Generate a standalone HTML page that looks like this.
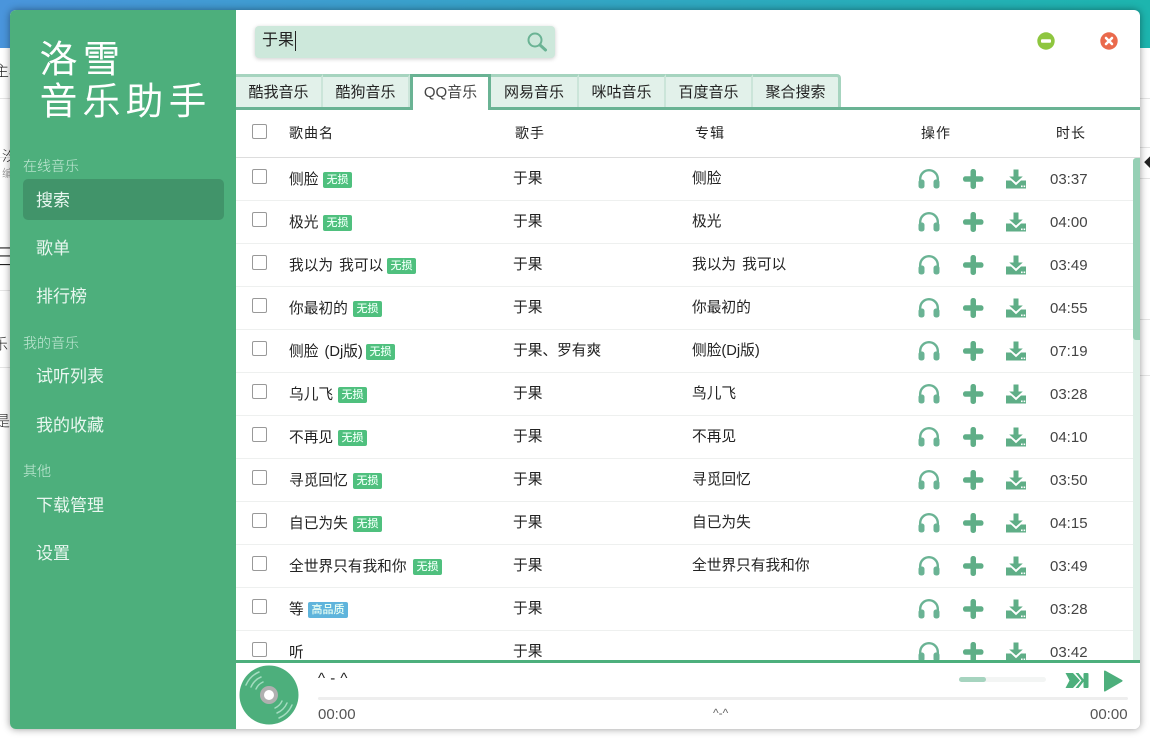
<!DOCTYPE html>
<html lang="zh"><head><meta charset="utf-8"><title>洛雪音乐助手</title>
<style>
*{box-sizing:border-box}
html,body{margin:0;padding:0}
body{width:1150px;height:738px;overflow:hidden;position:relative;background:#fff;font-family:"Liberation Sans","Noto Sans CJK SC",sans-serif;color:#222;font-weight:300}
div,span,svg{position:absolute}
.t{white-space:nowrap;line-height:20px}
#top{left:0;top:0;width:1150px;height:48px;background:linear-gradient(90deg,#4a95dc,#1db5ae)}
#win{left:10px;top:10px;width:1130px;height:719px;background:#fff;border-radius:6px;overflow:hidden;box-shadow:0 0 8px rgba(0,0,0,.42)}
#side{left:0;top:0;width:226px;height:719px;background:#4daf7c;color:#e9f7f0}
.logo{font-size:37px;letter-spacing:6px;color:#fff;line-height:40px;left:30px;font-family:"WenQuanYi Zen Hei","Noto Sans CJK SC",sans-serif;-webkit-text-stroke:.9px #fff}
.gr{left:13px;font-size:14px;color:#c6ead8}
.it{left:26px;font-size:17px;color:#e9f7f0;font-weight:400;margin-top:1px}
.tab{top:64px;height:33px;background:#e2f1ea;border-top:3px solid #a6d4bf;border-right:2px solid #cbe5d9;font-size:15px;text-align:center;line-height:31px;color:#222;font-weight:400}
.hd{top:113px;font-size:14px;letter-spacing:1px;color:#222;margin-left:-1px;font-weight:400}
.line{left:226px;width:897px;height:1px;background:#eef0ef}
.cb{left:242px;width:15px;height:15px;border:1px solid #999;border-radius:2px;background:#fff}
.n,.s,.a{font-size:14.7px;color:#222;font-weight:400;margin-top:1px;word-spacing:2px}
.d{left:1040px;font-size:15px;color:#444;margin-top:1px}
.bd{height:16px;border-radius:2px;color:#e9fff4;font-size:11px;line-height:16px;text-align:center;background:#4fc07e;width:29px;font-weight:500;white-space:nowrap;overflow:hidden}
.bd.h{background:#5fb4dc;width:40px}
</style></head><body>
<div id="top"></div>
<div style="left:0;top:98px;width:10px;height:1px;background:#e5e5e5"></div>
<div style="left:1140px;top:98px;width:10px;height:1px;background:#e5e5e5"></div>
<div style="left:1140px;top:147px;width:10px;height:1px;background:#e5e5e5"></div>
<div style="left:1140px;top:178px;width:10px;height:1px;background:#e5e5e5"></div>
<div style="left:1140px;top:319px;width:10px;height:1px;background:#e5e5e5"></div>
<div style="left:1140px;top:375px;width:10px;height:1px;background:#e5e5e5"></div>
<div style="left:0;top:157px;width:10px;height:1px;background:#e5e5e5"></div>
<div style="left:0;top:290px;width:10px;height:1px;background:#e5e5e5"></div>
<div style="left:0;top:367px;width:10px;height:1px;background:#e5e5e5"></div>
<div class="t" style="left:-6px;top:62px;font-size:15px">主材</div>
<div class="t" style="left:2px;top:146px;font-size:14px">汐</div>
<div class="t" style="left:2px;top:164px;font-size:11px;color:#888">编</div>
<div class="t" style="left:-6px;top:248px;font-size:24px">三</div>
<div class="t" style="left:-7px;top:335px;font-size:15px">乐</div>
<div class="t" style="left:-5px;top:412px;font-size:15px">是</div>
<div class="t" style="left:1144px;top:153px;font-size:13px;font-weight:700">◆</div>
<div id="win">
<div id="side">
<div class="logo t" style="top:26px;line-height:40px">洛雪</div>
<div class="logo t" style="top:68px;line-height:40px">音乐助手</div>
<div class="gr t" style="top:146px">在线音乐</div>
<div style="left:13px;top:169px;width:201px;height:41px;border-radius:5px;background:#41946a"></div>
<div class="it t" style="top:180px">搜索</div>
<div class="it t" style="top:228px">歌单</div>
<div class="it t" style="top:276px">排行榜</div>
<div class="gr t" style="top:323px">我的音乐</div>
<div class="it t" style="top:356px">试听列表</div>
<div class="it t" style="top:405px">我的收藏</div>
<div class="gr t" style="top:451px">其他</div>
<div class="it t" style="top:485px">下载管理</div>
<div class="it t" style="top:533px">设置</div>
</div>

<div style="left:245px;top:16px;width:300px;height:32px;background:#cde8db;border-radius:4px;box-shadow:0 1px 4px rgba(0,0,0,.2)"></div>
<div class="t" style="left:252px;top:21px;font-size:16px;color:#222;font-weight:400">于果</div>
<div style="left:285px;top:21px;width:1px;height:20px;background:#222"></div>
<svg style="left:516px;top:21px" width="22" height="22" viewBox="0 0 22 22"><circle cx="9" cy="9" r="6.5" fill="none" stroke="#6ab394" stroke-width="2"/><path d="M14 14l5.500 5" stroke="#6ab394" stroke-width="3" stroke-linecap="round"/></svg>
<svg style="left:1027px;top:22px" width="18" height="18" viewBox="0 0 18 18"><circle cx="9" cy="9" r="8.700" fill="#8ec63f"/><rect x="4" y="7.300" width="10" height="3.400" rx="1" fill="#fff"/></svg>
<svg style="left:1090px;top:22px" width="18" height="18" viewBox="0 0 18 18"><circle cx="9" cy="9" r="8.700" fill="#ea6a4c"/><path d="M6 6l6 6M12 6l-6 6" stroke="#fff" stroke-width="2.600" stroke-linecap="round"/></svg>

<div class="tab" style="left:226px;width:87px">酷我音乐</div>
<div class="tab" style="left:313px;width:87px">酷狗音乐</div>
<div class="tab" style="left:481px;width:88px">网易音乐</div>
<div class="tab" style="left:569px;width:87px">咪咕音乐</div>
<div class="tab" style="left:656px;width:87px">百度音乐</div>
<div class="tab" style="left:743px;width:88px;border-top-right-radius:4px;border-right:3px solid #a6d4bf">聚合搜索</div>
<div style="left:226px;top:97px;width:904px;height:3px;background:#6ab394"></div>
<div class="tab" style="left:400px;width:81px;height:36px;background:#fff;border:3px solid #6ab394;border-bottom:0;color:#444;line-height:32px">QQ音乐</div>

<div class="cb" style="top:114px"></div>
<div class="t hd" style="left:280px">歌曲名</div>
<div class="t hd" style="left:506px">歌手</div>
<div class="t hd" style="left:686px">专辑</div>
<div class="t hd" style="left:912px">操作</div>
<div class="t hd" style="left:1047px">时长</div>
<div style="left:226px;top:147px;width:904px;height:1px;background:#ddd"></div>

<svg width="0" height="0" style="left:0;top:0"><defs>
<g id="ic" fill="#6ab394">
<path d="M1 15v-5a10 10 0 0 1 20 0v5h-2.400v-5a7.600 7.600 0 0 0-15.200 0v5z"/>
<rect x="0.500" y="10.500" width="6" height="9" rx="2.500"/><rect x="15.500" y="10.500" width="6" height="9" rx="2.500"/>
<rect x="52.500" y="0" width="5.500" height="20" rx="2.500" fill="#5fae87"/>
<rect x="45" y="7.300" width="20.500" height="5.500" rx="2.500" fill="#5fae87"/>
<path d="M95.500 0.500h5v7h4.300l-6.800 6-6.800-6h4.300z" fill="#5fae87"/>
<path d="M88 11.500h5l5 4.700 5-4.700h5v8h-20z" fill="#5fae87"/>
<rect x="103" y="16.500" width="1.600" height="1.600" fill="#fff"/><rect x="105.600" y="16.500" width="1.600" height="1.600" fill="#fff"/>
</g></defs></svg>

<div class="line" style="top:190px"></div><div class="line" style="top:233px"></div><div class="line" style="top:276px"></div><div class="line" style="top:319px"></div><div class="line" style="top:362px"></div><div class="line" style="top:405px"></div><div class="line" style="top:448px"></div><div class="line" style="top:491px"></div><div class="line" style="top:534px"></div><div class="line" style="top:577px"></div><div class="line" style="top:620px"></div>

<div class="cb" style="top:159px"></div><div class="t n" style="left:279px;top:159px">侧脸</div><div class="bd" style="left:313px;top:162px">无损</div><div class="t s" style="left:503px;top:158px">于果</div><div class="t a" style="left:682px;top:158px">侧脸</div><svg style="left:908px;top:159px" width="110" height="20"><use href="#ic"/></svg><div class="t d" style="top:159px">03:37</div>
<div class="cb" style="top:202px"></div><div class="t n" style="left:279px;top:202px">极光</div><div class="bd" style="left:313px;top:205px">无损</div><div class="t s" style="left:503px;top:201px">于果</div><div class="t a" style="left:682px;top:201px">极光</div><svg style="left:908px;top:202px" width="110" height="20"><use href="#ic"/></svg><div class="t d" style="top:202px">04:00</div>
<div class="cb" style="top:245px"></div><div class="t n" style="left:279px;top:245px">我以为 我可以</div><div class="bd" style="left:377px;top:248px">无损</div><div class="t s" style="left:503px;top:244px">于果</div><div class="t a" style="left:682px;top:244px">我以为 我可以</div><svg style="left:908px;top:245px" width="110" height="20"><use href="#ic"/></svg><div class="t d" style="top:245px">03:49</div>
<div class="cb" style="top:288px"></div><div class="t n" style="left:279px;top:288px">你最初的</div><div class="bd" style="left:343px;top:291px">无损</div><div class="t s" style="left:503px;top:287px">于果</div><div class="t a" style="left:682px;top:287px">你最初的</div><svg style="left:908px;top:288px" width="110" height="20"><use href="#ic"/></svg><div class="t d" style="top:288px">04:55</div>
<div class="cb" style="top:331px"></div><div class="t n" style="left:279px;top:331px">侧脸 (Dj版)</div><div class="bd" style="left:356px;top:334px">无损</div><div class="t s" style="left:503px;top:330px">于果、罗有爽</div><div class="t a" style="left:682px;top:330px">侧脸(Dj版)</div><svg style="left:908px;top:331px" width="110" height="20"><use href="#ic"/></svg><div class="t d" style="top:331px">07:19</div>
<div class="cb" style="top:374px"></div><div class="t n" style="left:279px;top:374px">乌儿飞</div><div class="bd" style="left:328px;top:377px">无损</div><div class="t s" style="left:503px;top:373px">于果</div><div class="t a" style="left:682px;top:373px">鸟儿飞</div><svg style="left:908px;top:374px" width="110" height="20"><use href="#ic"/></svg><div class="t d" style="top:374px">03:28</div>
<div class="cb" style="top:417px"></div><div class="t n" style="left:279px;top:417px">不再见</div><div class="bd" style="left:328px;top:420px">无损</div><div class="t s" style="left:503px;top:416px">于果</div><div class="t a" style="left:682px;top:416px">不再见</div><svg style="left:908px;top:417px" width="110" height="20"><use href="#ic"/></svg><div class="t d" style="top:417px">04:10</div>
<div class="cb" style="top:460px"></div><div class="t n" style="left:279px;top:460px">寻觅回忆</div><div class="bd" style="left:343px;top:463px">无损</div><div class="t s" style="left:503px;top:459px">于果</div><div class="t a" style="left:682px;top:459px">寻觅回忆</div><svg style="left:908px;top:460px" width="110" height="20"><use href="#ic"/></svg><div class="t d" style="top:460px">03:50</div>
<div class="cb" style="top:503px"></div><div class="t n" style="left:279px;top:503px">自已为失</div><div class="bd" style="left:343px;top:506px">无损</div><div class="t s" style="left:503px;top:502px">于果</div><div class="t a" style="left:682px;top:502px">自已为失</div><svg style="left:908px;top:503px" width="110" height="20"><use href="#ic"/></svg><div class="t d" style="top:503px">04:15</div>
<div class="cb" style="top:546px"></div><div class="t n" style="left:279px;top:546px">全世界只有我和你</div><div class="bd" style="left:403px;top:549px">无损</div><div class="t s" style="left:503px;top:545px">于果</div><div class="t a" style="left:682px;top:545px">全世界只有我和你</div><svg style="left:908px;top:546px" width="110" height="20"><use href="#ic"/></svg><div class="t d" style="top:546px">03:49</div>
<div class="cb" style="top:589px"></div><div class="t n" style="left:279px;top:589px">等</div><div class="bd h" style="left:298px;top:592px">高品质</div><div class="t s" style="left:503px;top:588px">于果</div><svg style="left:908px;top:589px" width="110" height="20"><use href="#ic"/></svg><div class="t d" style="top:589px">03:28</div>
<div class="cb" style="top:632px"></div><div class="t n" style="left:279px;top:632px">听</div><div class="t s" style="left:503px;top:631px">于果</div><svg style="left:908px;top:632px" width="110" height="20"><use href="#ic"/></svg><div class="t d" style="top:632px">03:42</div>

<div style="left:1123px;top:148px;width:7px;height:502px;background:#dff0e8;border-radius:3px 0 0 0"></div>
<div style="left:1123px;top:148px;width:7px;height:182px;background:#96d0b5;border-radius:3px 0 0 3px"></div>

<div style="left:226px;top:650px;width:904px;height:69px;background:#fff;border-top:3px solid #4daf7c"></div>
<svg style="left:229px;top:654px" width="60" height="62" viewBox="0 0 60 62" fill="none">
<circle cx="30" cy="31" r="29.500" fill="#4daf7c"/>
<circle cx="30" cy="31" r="9" fill="#b0b0b0"/><circle cx="30" cy="31" r="5" fill="#fff"/>
<g stroke="#a4dcc0" stroke-width="1.500" stroke-linecap="round">
<path d="M7 21a25 25 0 0 1 13-13"/><path d="M12 23a19 19 0 0 1 10-10"/><path d="M17 25a14 14 0 0 1 7-7"/>
<path d="M53 41a25 25 0 0 1-13 13"/><path d="M48 39a19 19 0 0 1-10 10"/><path d="M43 37a14 14 0 0 1-7 7"/>
</g></svg>
<div class="t" style="left:308px;top:659px;font-size:15px;color:#222;font-weight:400;letter-spacing:.5px">^ - ^</div>
<div style="left:308px;top:687px;width:810px;height:3px;background:#eeeeee;border-radius:2px"></div>
<div class="t" style="left:308px;top:695px;font-size:15px;color:#555">00:00</div>
<div class="t" style="left:703px;top:693px;font-size:12px;color:#666">^-^</div>
<div class="t" style="left:1080px;top:695px;font-size:15px;color:#555">00:00</div>
<div style="left:949px;top:667px;width:87px;height:5px;background:#f3f5f4;border-radius:3px"></div>
<div style="left:949px;top:667px;width:27px;height:5px;background:#a6d4bf;border-radius:3px"></div>
<svg style="left:1055px;top:662px" width="24" height="17" viewBox="0 0 24 17" fill="#4daf7c"><path d="M0.500 1h7.500l7 7.500-7 7.500H0.500l4-7.500z"/><path d="M10.500 1h3l6 7.500-6 7.500h-3l6-7.500z"/><rect x="18.500" y="1" width="5" height="15" rx="1"/></svg>
<svg style="left:1092px;top:659px" width="22" height="24" viewBox="0 0 22 24"><path d="M2 2.500q0-1.500 1.500-.8l16.500 9.300q1.200.8 0 1.600L3.500 22.300q-1.500.8-1.500-.8z" fill="#4daf7c"/></svg>
</div>
</body></html>
